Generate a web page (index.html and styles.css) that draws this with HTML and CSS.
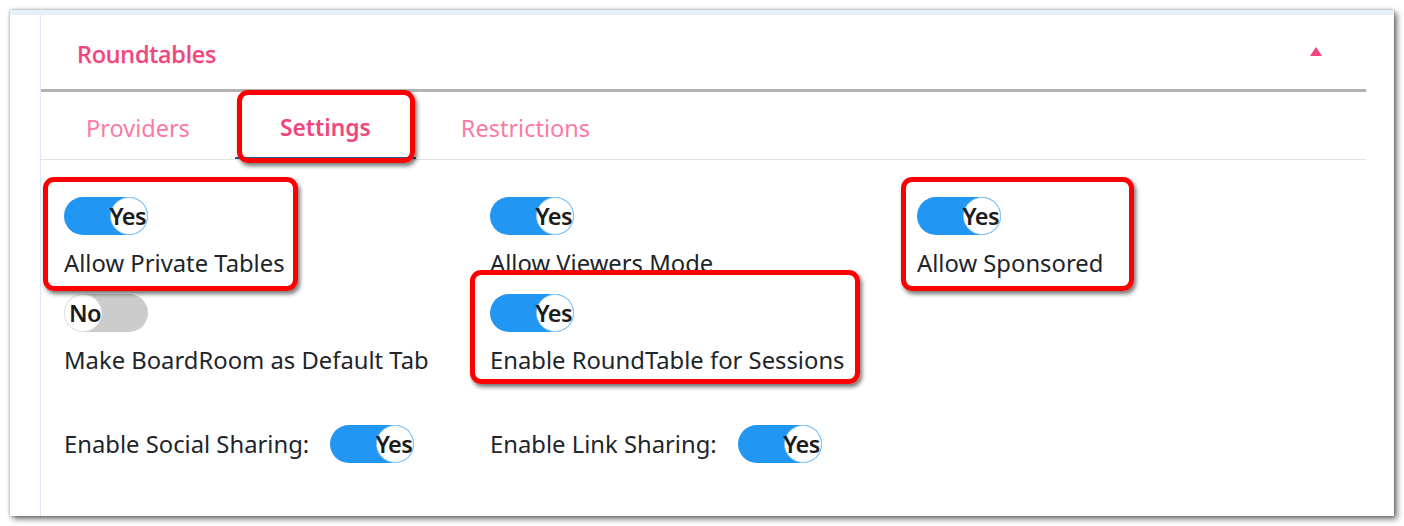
FILE: index.html
```html
<!DOCTYPE html>
<html>
<head>
<meta charset="utf-8">
<link rel="stylesheet" href="styles.css">
</head>
<body>
<div class="window">
  <div class="panel">
    <div class="header">
      <span class="title">Roundtables</span>
      <span class="caret"></span>
    </div>
    <div class="tabs">
      <span class="tab">Providers</span>
      <span class="tab active">Settings</span>
      <span class="tab">Restrictions</span>
    </div>
    <div class="settings">
      <div class="item">
        <span class="toggle on"><span class="tlabel">Yes</span></span>
        <span class="label">Allow Private Tables</span>
      </div>
      <div class="item">
        <span class="toggle on"><span class="tlabel">Yes</span></span>
        <span class="label">Allow Viewers Mode</span>
      </div>
      <div class="item">
        <span class="toggle on"><span class="tlabel">Yes</span></span>
        <span class="label">Allow Sponsored</span>
      </div>
      <div class="item">
        <span class="toggle off"><span class="tlabel">No</span></span>
        <span class="label">Make BoardRoom as Default Tab</span>
      </div>
      <div class="item">
        <span class="toggle on"><span class="tlabel">Yes</span></span>
        <span class="label">Enable RoundTable for Sessions</span>
      </div>
    </div>
    <div class="sharing">
      <div class="share">
        <span class="label">Enable Social Sharing:</span>
        <span class="toggle on"><span class="tlabel">Yes</span></span>
      </div>
      <div class="share">
        <span class="label">Enable Link Sharing:</span>
        <span class="toggle on"><span class="tlabel">Yes</span></span>
      </div>
    </div>
  </div>
  <div class="mark mark-tab"></div>
  <div class="mark mark-private"></div>
  <div class="mark mark-sessions"></div>
  <div class="mark mark-sponsored"></div>
</div>
</body>
</html>
```
FILE: styles.css
```css
html, body {
  margin: 0;
  padding: 0;
  background: #ffffff;
}
body {
  font-family: "Noto Sans", "Open Sans", sans-serif;
  color: #212529;
  padding: 10px 0 0 10px;
  height: 526px;
  box-sizing: border-box;
  overflow: hidden;
}
.window {
  position: relative;
  width: 1384px;
  height: 506px;
  background: #ffffff;
  border-top: 5px solid #e7eff9;
  box-sizing: border-box;
  box-shadow: 3px 3px 6px rgba(0, 0, 0, 0.55), 0 0 3px rgba(0, 0, 0, 0.35);
}
.panel {
  margin-left: 30px;
  width: 1326px;
  height: 501px;
  border-left: 1px solid #dde9f6;
  box-sizing: border-box;
}
.header {
  height: 77px;
  border-bottom: 3px solid #b3b3b3;
  box-sizing: border-box;
  display: flex;
  align-items: center;
  justify-content: space-between;
  padding: 4px 44px 0 36px;
}
.title {
  color: #f2457c;
  font-size: 23.5px;
  font-weight: 500;
  letter-spacing: -0.2px;
  -webkit-text-stroke: 0.25px #f2457c;
}
.caret {
  width: 0;
  height: 0;
  border-left: 6px solid transparent;
  border-right: 6px solid transparent;
  border-bottom: 9px solid #f2457c;
  margin-bottom: 5px;
}
.tabs {
  height: 68px;
  border-bottom: 1px solid #e3e3e3;
  box-sizing: border-box;
  display: flex;
}
.tab {
  padding: 6px 45px 0;
  display: flex;
  align-items: center;
  font-size: 23.5px;
  color: #fb7aa4;
  box-sizing: border-box;
  border-bottom: 2px solid transparent;
}
.tab.active {
  color: #f2457c;
  font-weight: 600;
  font-size: 22.8px;
  border-bottom-color: #2b5a9c;
}
.settings {
  display: grid;
  grid-template-columns: 426px 427px 427px;
  padding: 37px 0 0 23px;
  row-gap: 15px;
}
.item {
  display: flex;
  flex-direction: column;
  align-items: flex-start;
}
.label {
  font-size: 23.8px;
  line-height: 32px;
  color: #212529;
  white-space: nowrap;
}
.item .label {
  margin-top: 12px;
}
.toggle {
  position: relative;
  display: inline-flex;
  align-items: center;
  width: 84px;
  height: 38px;
  border-radius: 19px;
  box-sizing: border-box;
  flex: none;
}
.toggle::after {
  content: "";
  position: absolute;
  top: 0;
  width: 38px;
  height: 38px;
  border-radius: 50%;
  background: #ffffff;
  box-sizing: border-box;
}
.toggle.on {
  background: #2196f3;
  justify-content: flex-end;
}
.toggle.on::after {
  right: 0;
  border: 1px solid #8ec8f7;
}
.toggle.off {
  background: #cccccc;
  justify-content: flex-start;
}
.toggle.off::after {
  left: 0;
  border: 1px solid #e6e6e6;
}
.tlabel {
  position: relative;
  z-index: 1;
  font-size: 23.5px;
  font-weight: 600;
  color: #1c1c1c;
  letter-spacing: -0.6px;
}
.toggle.on .tlabel {
  margin-right: 2px;
}
.toggle.off .tlabel {
  margin-left: 5px;
}
.sharing {
  display: grid;
  grid-template-columns: 426px 427px;
  padding: 49px 0 0 23px;
}
.share {
  display: flex;
  align-items: center;
  gap: 21px;
}
.mark {
  position: absolute;
  border: 5px solid #ff0000;
  border-radius: 11px;
  box-sizing: border-box;
  box-shadow: 2px 3px 4px rgba(0, 0, 0, 0.55);
}
.mark-tab {
  left: 227px;
  top: 75px;
  width: 178px;
  height: 73px;
}
.mark-private {
  left: 33px;
  top: 162px;
  width: 255px;
  height: 114px;
}
.mark-sessions {
  left: 460px;
  top: 255px;
  width: 390px;
  height: 114px;
}
.mark-sponsored {
  left: 891px;
  top: 162px;
  width: 233px;
  height: 114px;
}
```
